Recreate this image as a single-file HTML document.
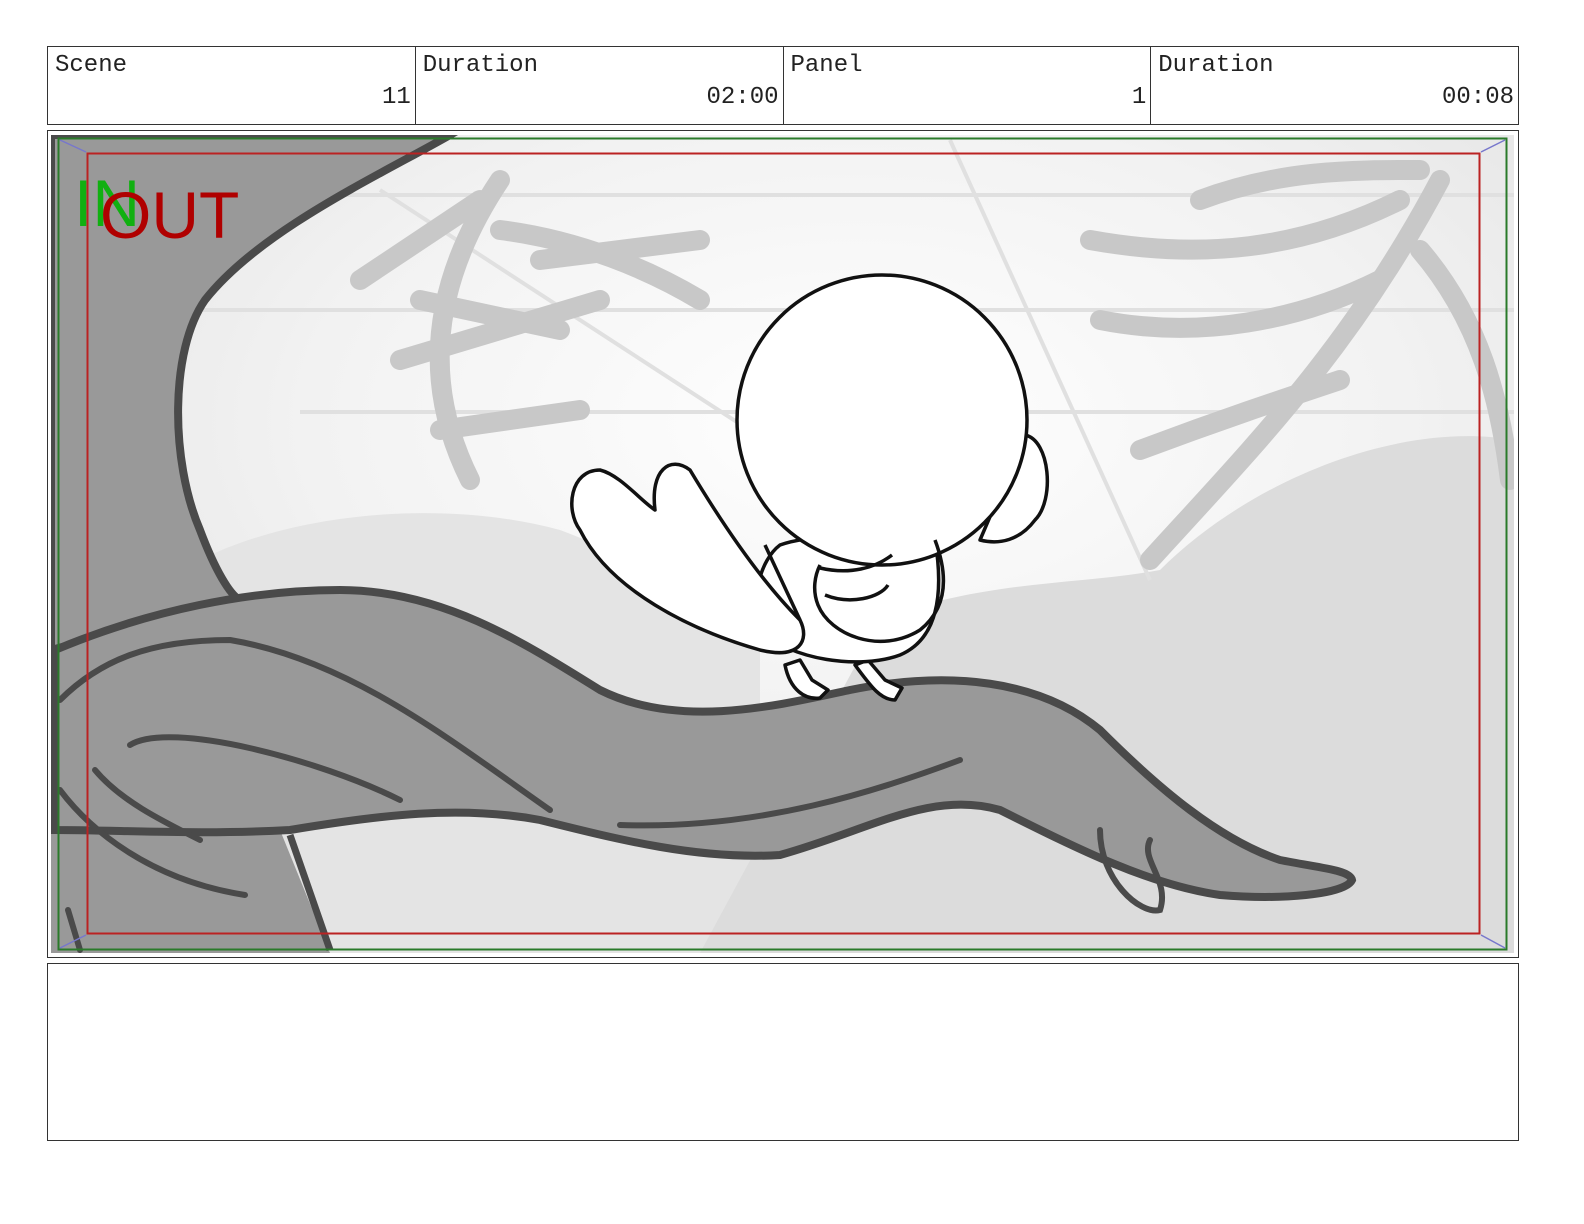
<!DOCTYPE html>
<html><head><meta charset="utf-8"><style>
html,body{margin:0;padding:0}
body{width:1584px;height:1224px;background:#fff;position:relative;overflow:hidden;font-family:"Liberation Mono","DejaVu Sans Mono",monospace;}
.hdr{position:absolute;left:47px;top:46px;width:1470px;height:77px;border:1px solid #333;display:flex;}
.c{flex:1;border-right:1px solid #333;position:relative;}
.c:last-child{border-right:none}
.l{position:absolute;left:7px;top:5px;font-size:24px;color:#222;}
.v{position:absolute;right:4px;top:37px;font-size:24px;color:#222;}
.img{position:absolute;left:47px;top:130px;width:1470px;height:826px;border:1px solid #333;}
.notes{position:absolute;left:47px;top:963px;width:1470px;height:176px;border:1px solid #333;}
svg{position:absolute;left:0;top:0}
</style></head><body>
<div class="hdr">
<div class="c"><span class="l">Scene</span><span class="v">11</span></div>
<div class="c"><span class="l">Duration</span><span class="v">02:00</span></div>
<div class="c"><span class="l">Panel</span><span class="v">1</span></div>
<div class="c"><span class="l">Duration</span><span class="v">00:08</span></div>
</div>
<div class="img"></div>
<div class="notes"></div>
<svg width="1584" height="1224" viewBox="0 0 1584 1224">
<defs>
<radialGradient id="bg" cx="0.55" cy="0.35" r="0.75"><stop offset="0" stop-color="#fff"/><stop offset="0.5" stop-color="#f2f2f2"/><stop offset="1" stop-color="#dedede"/></radialGradient>
<clipPath id="cp"><rect x="51" y="135" width="1463" height="818"/></clipPath>
</defs>
<g clip-path="url(#cp)">
<rect x="51" y="135" width="1463" height="818" fill="url(#bg)"/>
<path d="M200,560 C300,510 450,500 560,530 C640,560 700,600 760,640 L760,953 L51,953Z" fill="#e4e4e4"/>
<path d="M880,620 C980,580 1080,585 1160,570 C1250,480 1400,420 1514,440 L1514,953 L700,953Z" fill="#dcdcdc"/>
<g stroke="#e0e0e0" stroke-width="4" fill="none"><path d="M330,195 H1514"/><path d="M200,310 H1514"/><path d="M300,412 H1514"/><path d="M950,140 L1150,580"/><path d="M380,190 L780,450"/></g>
<g stroke="#c8c8c8" stroke-width="20" fill="none" stroke-linecap="round">
<path d="M470,480 C430,400 420,300 500,180"/><path d="M420,300 L560,330"/><path d="M400,360 L600,300"/><path d="M360,280 L480,200"/><path d="M500,230 C580,240 650,270 700,300"/><path d="M440,430 L580,410"/><path d="M540,260 L700,240"/>
<path d="M1150,560 C1250,450 1350,350 1440,180"/><path d="M1090,240 C1200,260 1300,250 1400,200"/><path d="M1100,320 C1200,340 1300,320 1380,280"/><path d="M1200,200 C1280,170 1350,170 1420,170"/><path d="M1140,450 C1220,420 1280,400 1340,380"/><path d="M1420,250 C1480,320 1500,400 1510,480"/>
</g>
<path d="M51,135 L450,135 C380,175 260,230 205,300 C170,350 170,460 200,530 C215,570 230,595 240,600 L51,650Z" fill="#999" stroke="#4a4a4a" stroke-width="8"/>
<path d="M51,820 L280,830 L330,953 L51,953Z" fill="#999"/>
<path d="M290,835 L330,950" stroke="#4a4a4a" stroke-width="7" fill="none"/>
<path d="M55,650 C150,610 250,590 340,590 C440,590 520,640 600,690 C680,730 780,705 850,690 C950,670 1040,680 1100,730 C1160,790 1220,840 1280,860 C1320,868 1350,870 1352,880 C1345,895 1280,900 1220,895 C1150,885 1080,850 1000,810 C930,790 870,830 780,855 C700,860 620,840 540,820 C460,805 380,815 290,830 C200,835 120,830 55,830Z" fill="#999" stroke="#4a4a4a" stroke-width="8"/>
<g stroke="#4a4a4a" stroke-width="6" fill="none" stroke-linecap="round">
<path d="M130,745 C170,720 320,760 400,800"/><path d="M60,700 C100,660 150,640 230,640 C350,660 450,740 550,810"/><path d="M620,825 C760,830 880,790 960,760"/><path d="M1100,830 C1100,880 1140,915 1160,910 C1170,880 1140,860 1150,840"/><path d="M95,770 C120,800 160,820 200,840"/><path d="M60,790 C90,830 150,880 245,895"/><path d="M68,910 L80,950"/>
</g>
<g stroke="#111" stroke-width="3.5" fill="#fff" stroke-linejoin="round">
<path d="M785,665 C790,690 805,700 820,698 L828,690 L812,680 L800,660Z"/>
<path d="M855,665 C870,685 880,700 895,700 L902,688 L885,680 L868,660Z"/>
<path d="M1025,435 C1050,440 1055,500 1035,520 C1020,540 1000,545 980,540Z"/>
<path d="M780,545 C760,560 750,600 760,630 C790,660 860,670 900,655 C935,640 945,600 935,540 C900,540 820,530 780,545Z"/>
<path d="M800,620 C760,580 720,520 690,470 C670,455 650,470 655,510 C640,500 620,475 600,470 C570,470 565,510 580,530 C610,590 690,630 760,650 C800,660 810,640 800,620Z"/>
<circle cx="882" cy="420" r="145"/>
<path d="M935,540 C950,580 945,610 920,630 C880,655 830,635 818,605 C812,590 815,575 820,565" fill="none"/>
<path d="M820,568 C850,575 875,568 892,555" fill="none"/><path d="M825,595 C850,605 880,598 888,585" fill="none"/>
<path d="M765,545 L800,620" fill="none"/>
</g>
<text x="74" y="226" font-family="Liberation Sans,sans-serif" font-size="66" fill="#11b011">IN</text>
<text x="100" y="238" font-family="Liberation Sans,sans-serif" font-size="66" fill="#b00000">OUT</text>
</g>
<rect x="58.5" y="138.5" width="1448" height="811" fill="none" stroke="#2a7a2a" stroke-width="2"/>
<rect x="87.5" y="153.5" width="1392" height="780" fill="none" stroke="#b22" stroke-width="2"/>
<g stroke="#7777cc" stroke-width="1.5"><path d="M60,140 L86,152"/><path d="M1505,140 L1481,152"/><path d="M60,948 L86,935"/><path d="M1505,948 L1481,935"/></g>
</svg>
</body></html>
